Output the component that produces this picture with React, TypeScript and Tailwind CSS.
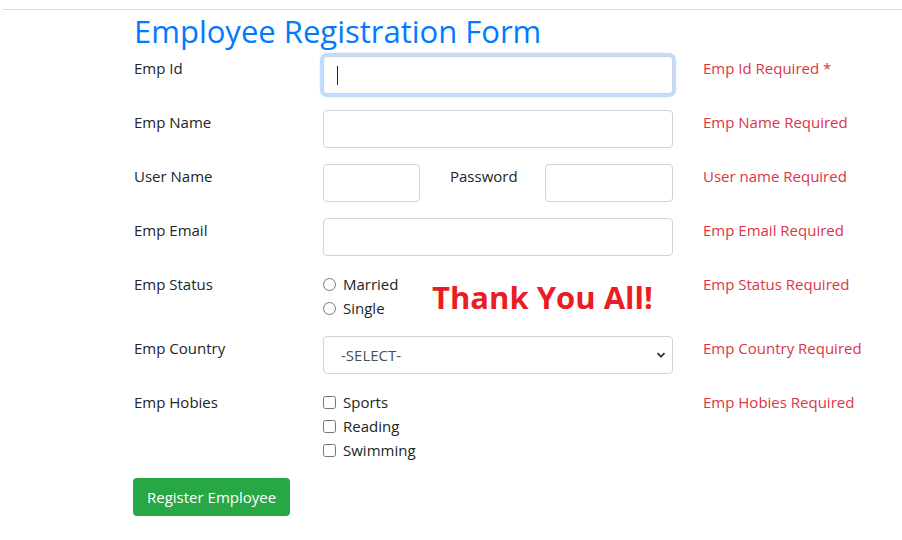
import React from 'react';

const fieldCls =
  'h-[38px] rounded-[4px] border border-[#ced4da] bg-white px-3 text-[15px] text-[#495057] outline-none';

function Row({
  label,
  error,
  children,
}: {
  label: string;
  error: string;
  children: React.ReactNode;
}) {
  return (
    <div className="flex items-start mb-4">
      <label className="w-[189px] shrink-0 leading-6">{label}</label>
      <div className="w-[350px] shrink-0">{children}</div>
      <div className="ml-[30px] leading-6 text-[#dc3545]">{error}</div>
    </div>
  );
}

export default function App() {
  return (
    <div className="min-h-screen bg-white font-['Open_Sans',sans-serif] text-[15px] text-[#212529]">
      {/* top rule */}
      <div className="pt-[9px] pl-[3px]">
        <div className="border-t border-[#dcdcdc]" />
      </div>

      <form className="pl-[134px]">
        <h2 className="mt-[2px] mb-[6px] text-[31px] leading-[38px] font-medium text-[#007bff]">
          Employee Registration Form
        </h2>

        <Row label="Emp Id" error="Emp Id Required *">
          <div className="relative">
            <input
              className={`${fieldCls} w-full border-[#80bdff] shadow-[0_0_0_3.2px_rgba(0,123,255,0.25)]`}
            />
            <span className="absolute left-[14px] top-[10px] h-[19px] w-px bg-[#212529]" />
          </div>
        </Row>

        <Row label="Emp Name" error="Emp Name Required">
          <input className={`${fieldCls} w-full`} />
        </Row>

        <Row label="User Name" error="User name Required">
          <div className="flex items-start">
            <input className={`${fieldCls} w-[97px]`} />
            <span className="flex-1 pl-[30px] leading-6">Password</span>
            <input className={`${fieldCls} w-[128px]`} />
          </div>
        </Row>

        <Row label="Emp Email" error="Emp Email Required">
          <input className={`${fieldCls} w-full`} />
        </Row>

        <Row label="Emp Status" error="Emp Status Required">
          <div className="flex items-center">
            <div className="w-[109px] flex flex-col">
              {['Married', 'Single'].map((v) => (
                <label key={v} className="flex items-center gap-[7px] leading-6">
                  <input type="radio" name="status" className="m-0 h-[13px] w-[13px]" />
                  {v}
                </label>
              ))}
            </div>
            <span className="pt-[3px] text-[31px] font-bold leading-none text-[#ec1c24]">
              Thank You All!
            </span>
          </div>
        </Row>

        <Row label="Emp Country" error="Emp Country Required">
          <div className="relative">
            <select className={`${fieldCls} w-full appearance-none pl-[17px]`}>
              <option>-SELECT-</option>
            </select>
            <svg
              className="absolute right-[7px] top-[14px] h-[10px] w-[10px] pointer-events-none"
              viewBox="0 0 10 10"
            >
              <path d="M1.5 3.2 5 6.7 8.5 3.2" fill="none" stroke="#343a40" strokeWidth="1.8" />
            </svg>
          </div>
        </Row>

        <Row label="Emp Hobies" error="Emp Hobies Required">
          <div className="flex flex-col">
            {['Sports', 'Reading', 'Swimming'].map((v) => (
              <label key={v} className="flex items-center gap-[7px] leading-6">
                <input type="checkbox" className="m-0 h-[13px] w-[13px]" />
                {v}
              </label>
            ))}
          </div>
        </Row>

        <button
          type="button"
          className="-ml-px h-[38px] rounded-[4px] bg-[#28a745] px-[14px] text-[15px] text-white"
        >
          Register Employee
        </button>
      </form>
    </div>
  );
}
